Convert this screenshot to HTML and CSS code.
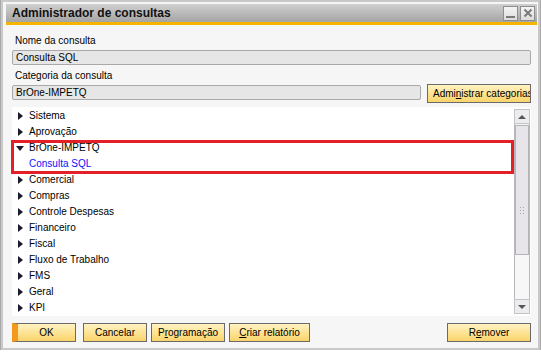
FILE: index.html
```html
<!DOCTYPE html>
<html lang="pt">
<head>
    <meta charset="UTF-8">
    <title>Administrador de consultas</title>
    <link rel="stylesheet" href="styles.css">
</head>
<body>
    <div class="window">
        <!-- Barra de título -->
        <div class="titlebar">
            <span class="title">Administrador de consultas</span>
            <div class="controls">
                <span class="ctl ctl-min"></span>
                <span class="ctl ctl-close">
                    <svg width="10" height="10" viewBox="0 0 10 10"><path d="M1.5 1.5L8.5 8.5M8.5 1.5L1.5 8.5" stroke="#7a7a7a" stroke-width="2"/></svg>
                </span>
            </div>
        </div>

        <div class="content">
            <div class="label">Nome da consulta</div>
            <div class="field">Consulta SQL</div>
            <div class="label">Categoria da consulta</div>
            <div class="row-cat">
                <div class="field field-cat">BrOne-IMPETQ</div>
                <button class="btn btn-cat">Admi<u>n</u>istrar categorias</button>
            </div>

            <!-- Árvore de categorias -->
            <div class="tree-box">
                <ul class="tree">
                    <li><span class="arrow"></span>Sistema</li>
                    <li><span class="arrow"></span>Aprovação</li>
                    <li class="open"><span class="arrow down"></span>BrOne-IMPETQ</li>
                    <li class="query">Consulta SQL</li>
                    <li><span class="arrow"></span>Comercial</li>
                    <li><span class="arrow"></span>Compras</li>
                    <li><span class="arrow"></span>Controle Despesas</li>
                    <li><span class="arrow"></span>Financeiro</li>
                    <li><span class="arrow"></span>Fiscal</li>
                    <li><span class="arrow"></span>Fluxo de Trabalho</li>
                    <li><span class="arrow"></span>FMS</li>
                    <li><span class="arrow"></span>Geral</li>
                    <li><span class="arrow"></span>KPI</li>
                </ul>
                <div class="highlight"></div>
                <div class="scrollbar">
                    <div class="sb-btn"><span class="sb-up"></span></div>
                    <div class="sb-track">
                        <div class="sb-thumb"><span class="grip"></span></div>
                    </div>
                    <div class="sb-btn"><span class="sb-down"></span></div>
                </div>
            </div>

            <!-- Botões -->
            <div class="buttons">
                <button class="btn btn-ok">OK</button>
                <button class="btn btn-cancel">Cancelar</button>
                <button class="btn btn-prog">P<u>r</u>ogramação</button>
                <button class="btn btn-rel"><u>C</u>riar relatório</button>
                <span class="spacer"></span>
                <button class="btn btn-rem">R<u>e</u>mover</button>
            </div>
        </div>
    </div>
</body>
</html>
```

FILE: styles.css
```css
/* Estilo general */
body {
    margin: 0;
    background: #ffffff;
    font-family: "Liberation Sans", Arial, sans-serif;
    font-size: 10px;
    color: #000;
}

.window {
    box-sizing: border-box;
    width: 539px;
    height: 350px;
    margin: 0 0 0 1px;
    border: 2px solid #c9c9c9;
    outline: 1px solid #a9a9a9;
    background: #f6f6f6;
    display: flex;
    flex-direction: column;
}

/* Barra de título */
.titlebar {
    height: 18px;
    margin: 2px 1px 0 3px;
    padding: 0 2px 0 6px;
    background: linear-gradient(#d0d0d0, #a4a4a4);
    border-bottom: 3px solid #f5b400;
    display: flex;
    align-items: center;
    justify-content: space-between;
}

.title {
    font-weight: bold;
    font-size: 12px;
    color: #111;
}

.controls {
    display: flex;
    gap: 2px;
}

.ctl {
    box-sizing: border-box;
    width: 15px;
    height: 15px;
    border: 1px solid #8e8e8e;
    background: linear-gradient(#f4f4f4, #dcdcdc);
    display: flex;
    align-items: center;
    justify-content: center;
    position: relative;
}

.ctl-min::after {
    content: "";
    position: absolute;
    left: 2px;
    right: 2px;
    bottom: 2px;
    height: 2px;
    background: #7a7a7a;
}

.content {
    flex: 1;
    padding: 8px 7px 0 9px;
    display: flex;
    flex-direction: column;
}

.label {
    height: 16px;
    line-height: 16px;
    padding-left: 3px;
}

.field {
    box-sizing: border-box;
    height: 15px;
    line-height: 13px;
    padding-left: 3px;
    margin: 1px 0 3px;
    background: #e6e6e6;
    border: 1px solid #a9a9a9;
    border-radius: 2px;
}

.row-cat {
    display: flex;
    align-items: center;
    gap: 6px;
}

.field-cat {
    flex: 0 0 409px;
}

.btn {
    box-sizing: border-box;
    height: 19px;
    padding: 0;
    font-family: inherit;
    font-size: 10px;
    color: #000;
    border: 1px solid #6a6a6a;
    background: linear-gradient(#fff3c2, #fbd46a);
    white-space: nowrap;
    overflow: hidden;
}

.btn-cat {
    width: 104px;
    text-align: left;
    padding-left: 5px;
}

/* Árvore */
.tree-box {
    position: relative;
    height: 209px;
    margin-top: 4px;
    background: #ffffff;
    display: flex;
}

.tree {
    list-style: none;
    margin: 0;
    padding: 1px 0 0;
    flex: 1;
}

.tree li {
    height: 16px;
    line-height: 16px;
    padding-left: 17px;
    position: relative;
}

.arrow {
    position: absolute;
    left: 6px;
    top: 4px;
    width: 0;
    height: 0;
    border-top: 4px solid transparent;
    border-bottom: 4px solid transparent;
    border-left: 5px solid #1a1a2a;
}

.arrow.down {
    left: 4px;
    top: 6px;
    border-left: 4px solid transparent;
    border-right: 4px solid transparent;
    border-top: 5px solid #1a1a2a;
    border-bottom: 0;
}

.tree li.query {
    color: #1010ff;
}

.highlight {
    position: absolute;
    left: -1px;
    top: 33px;
    width: 497px;
    height: 28px;
    border: 3px solid #e3202a;
}

/* Barra de rolagem */
.scrollbar {
    width: 16px;
    margin: 2px 1px 2px 0;
    display: flex;
    flex-direction: column;
}

.sb-btn {
    box-sizing: border-box;
    height: 15px;
    border: 1px solid #c4c4c8;
    background: #ecebee;
    display: flex;
    align-items: center;
    justify-content: center;
}

.sb-up {
    border-left: 4px solid transparent;
    border-right: 4px solid transparent;
    border-bottom: 4px solid #555;
}

.sb-down {
    border-left: 4px solid transparent;
    border-right: 4px solid transparent;
    border-top: 4px solid #555;
}

.sb-track {
    flex: 1;
    box-sizing: border-box;
    border-left: 1px solid #b8b8bc;
    border-right: 1px solid #b8b8bc;
    background: #f7f7f7;
    padding-top: 1px;
}

.sb-thumb {
    box-sizing: border-box;
    height: 130px;
    border: 1px solid #b4b4b8;
    background: #e7e5ea;
    display: flex;
    align-items: flex-end;
    justify-content: center;
    padding-bottom: 39px;
}

.grip {
    width: 6px;
    height: 9px;
    background-image: radial-gradient(circle, #a8a8ac 0.8px, transparent 1px);
    background-size: 3px 3px;
}

/* Botões inferiores */
.buttons {
    display: flex;
    gap: 4px;
    margin-top: 7px;
}

.btn-ok {
    width: 64px;
    margin-right: 3px;
    border-left: 6px solid #f39a1e;
}

.btn-cancel { width: 64px; }
.btn-prog { width: 74px; }
.btn-rel { width: 81px; }
.btn-rem { width: 84px; }

.spacer {
    flex: 1;
}
```
